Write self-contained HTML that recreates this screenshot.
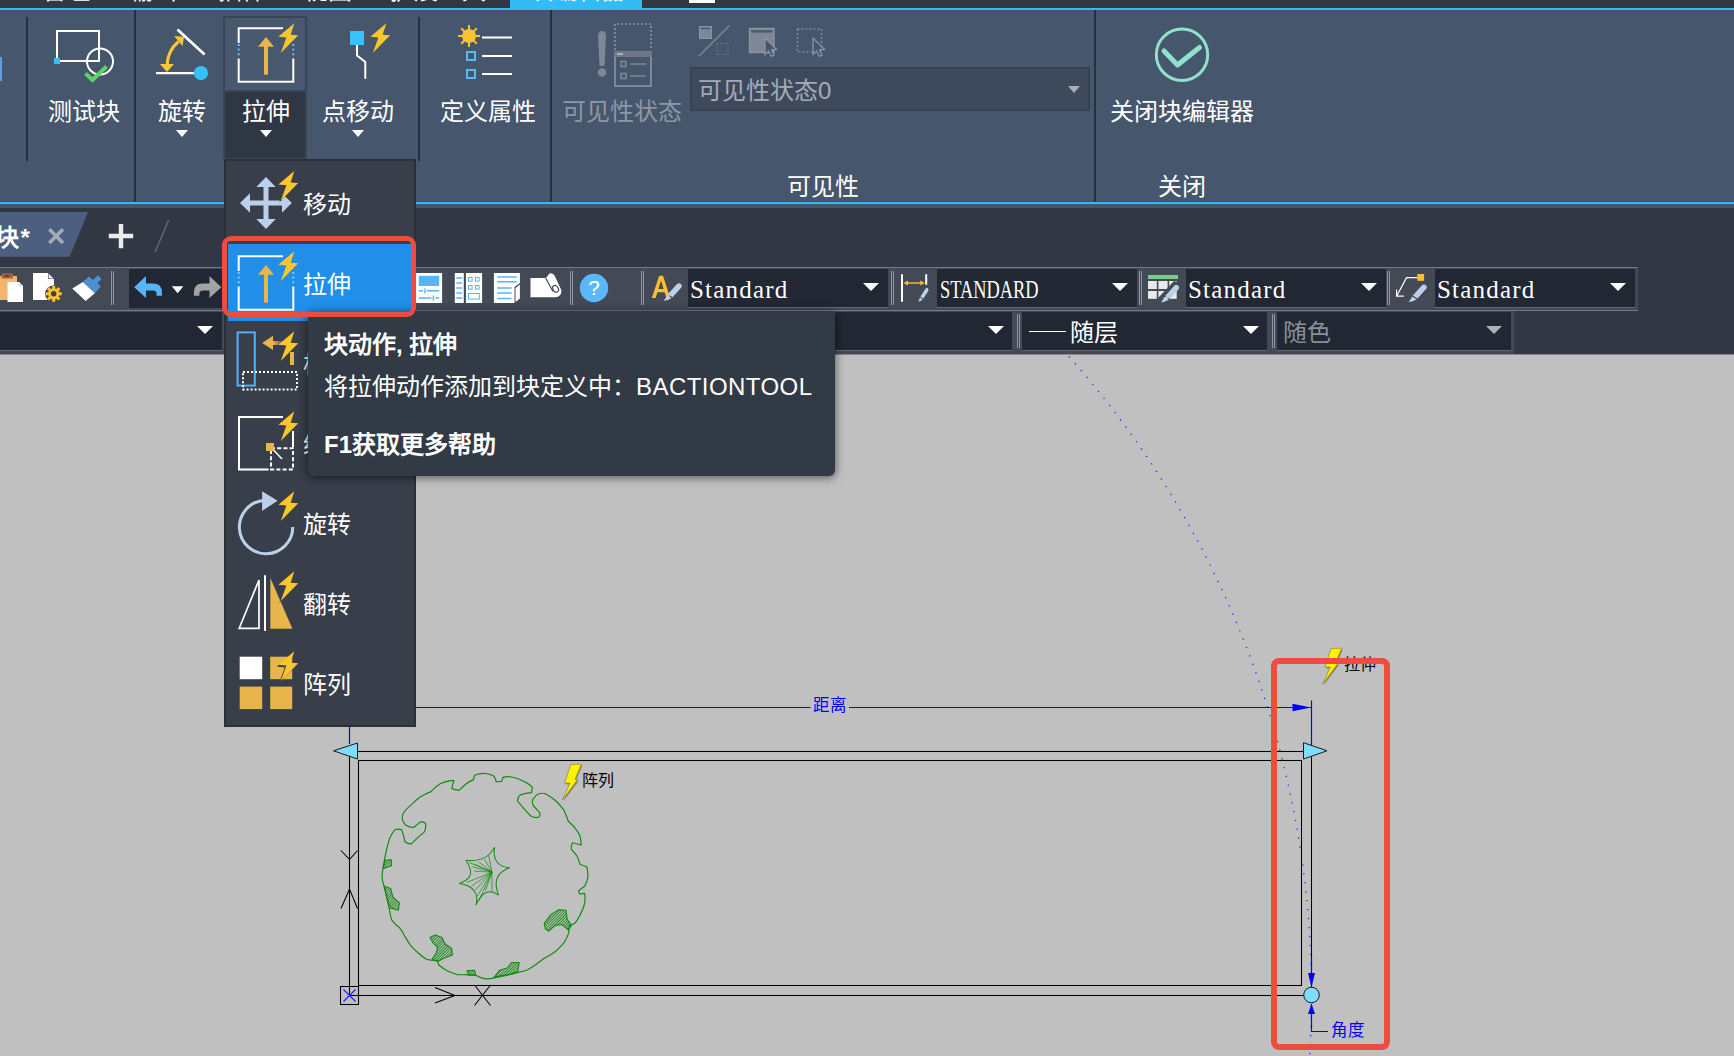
<!DOCTYPE html>
<html lang="zh-CN">
<head>
<meta charset="utf-8">
<title>Block Editor</title>
<style>
*{box-sizing:border-box;margin:0;padding:0}
html,body{width:1734px;height:1056px;overflow:hidden;background:#c0c0c0}
body{font-family:"Liberation Sans",sans-serif;color:#fff;position:relative}
.abs{position:absolute}
#root{position:absolute;left:0;top:0;width:1734px;height:1056px;overflow:hidden}
.t24{font-size:24px;line-height:28px;white-space:nowrap;position:absolute;margin-top:2px}
.ctr{transform:translateX(-50%)}
.mono{font-family:"Liberation Serif",serif;font-size:25px;line-height:30px;white-space:nowrap;position:absolute;color:#fff;transform-origin:0 0;letter-spacing:1.2px}
.mono.up{transform:scaleX(.735);letter-spacing:0}
.vsep{position:absolute;width:2px;background:#2a3039}
.tri{position:absolute;width:0;height:0;border-left:6px solid transparent;border-right:6px solid transparent;border-top:7px solid #fff}
.tri.t16{border-left-width:8px;border-right-width:8px;border-top-width:8px}
.combo{position:absolute;background:#212733;border-bottom:1px solid #5f6878}
svg{position:absolute;left:0;top:0;overflow:visible}
</style>
</head>
<body>
<div id="root">

<!-- ===== top tab strip ===== -->
<div class="abs" id="topbar" style="left:0;top:0;width:1734px;height:8px;background:#313843"></div>
<div class="abs" style="left:510px;top:0;width:132px;height:8px;background:#33bbf5"></div>
<div class="abs" style="left:689px;top:0;width:26px;height:3px;background:#fff"></div>
<div class="abs" style="left:0;top:0;width:1734px;height:8px;overflow:hidden">
  <div class="t24 ctr" style="left:66px;top:-25px">管理</div>
  <div class="t24 ctr" style="left:153px;top:-25px">输出</div>
  <div class="t24 ctr" style="left:242px;top:-25px">插件</div>
  <div class="t24 ctr" style="left:328px;top:-25px">视图</div>
  <div class="t24 ctr" style="left:438px;top:-25px">扩展工具</div>
  <div class="t24 ctr" style="left:577px;top:-25px">块编辑器</div>
</div>
<div class="abs" style="left:0;top:8px;width:1734px;height:2px;background:#33bbf5"></div>

<!-- ===== ribbon ===== -->
<div class="abs" id="ribbon" style="left:0;top:10px;width:1734px;height:198px;background:#46566c"></div>
<div class="abs" style="left:0;top:201px;width:1734px;height:1px;background:#414e62"></div>
<div class="abs" style="left:0;top:202px;width:1734px;height:2px;background:#33bbf5"></div>

<!-- ===== doc tab bar ===== -->
<div class="abs" id="docbar" style="left:0;top:208px;width:1734px;height:146px;background:#313843"></div>

<!-- ===== toolbars ===== -->

<!-- ===== canvas ===== -->
<div class="abs" id="canvas" style="left:0;top:354px;width:1734px;height:702px;background:#c0c0c0"></div>

<div class="abs" style="left:0;top:354px;width:1734px;height:1px;background:#85878b"></div>
<!--RIBBON-START-->
<!-- ribbon separators -->
<div class="vsep" style="left:26px;top:17px;height:144px"></div>
<div class="vsep" style="left:134px;top:10px;height:192px"></div>
<div class="vsep" style="left:418px;top:17px;height:144px"></div>
<div class="vsep" style="left:550px;top:10px;height:192px"></div>
<div class="vsep" style="left:1094px;top:10px;height:192px"></div>
<div class="abs" style="left:0;top:57px;width:2px;height:24px;background:#5a9fe6"></div>

<!-- stretch button (pressed) -->
<div class="abs" style="left:223px;top:16px;width:84px;height:143px;background:#3a4658"></div>
<div class="abs" style="left:225px;top:18px;width:80px;height:72px;background:#48586f"></div>
<div class="abs" style="left:225px;top:92px;width:80px;height:66px;background:#2f3744"></div>

<!-- ribbon labels -->
<div class="t24 ctr" style="left:84px;top:96px">测试块</div>
<div class="t24 ctr" style="left:182px;top:96px">旋转</div>
<div class="t24 ctr" style="left:266px;top:96px">拉伸</div>
<div class="t24 ctr" style="left:358px;top:96px">点移动</div>
<div class="t24 ctr" style="left:488px;top:96px">定义属性</div>
<div class="t24 ctr" style="left:622px;top:96px;color:#8e97a4">可见性状态</div>
<div class="t24 ctr" style="left:1182px;top:96px">关闭块编辑器</div>
<div class="t24 ctr" style="left:823px;top:171px">可见性</div>
<div class="t24 ctr" style="left:1182px;top:171px">关闭</div>
<div class="tri" style="left:176px;top:130px"></div>
<div class="tri" style="left:260px;top:130px"></div>
<div class="tri" style="left:352px;top:130px"></div>

<!-- visibility combobox -->
<div class="abs" style="left:690px;top:67px;width:400px;height:44px;background:#3e4a5c;border:2px solid #384253"></div>
<div class="t24" style="left:698px;top:75px;color:#a4abb6">可见性状态0</div>
<div class="tri" style="left:1068px;top:86px;border-top-color:#a9afb9"></div>

<!-- ribbon icons -->
<svg width="1734" height="210" viewBox="0 0 1734 210">
  <!-- test block -->
  <rect x="57" y="31" width="42" height="30" fill="none" stroke="#fff" stroke-width="2"/>
  <circle cx="100" cy="61.5" r="13" fill="none" stroke="#fff" stroke-width="2"/>
  <rect x="54" y="58" width="6" height="6" fill="#38bdf8"/>
  <path d="M85.5 73.5 L92.5 80 L106.5 66.5" fill="none" stroke="#5ad468" stroke-width="4"/>
  <!-- rotate -->
  <path d="M156 73.1 H200" stroke="#fff" stroke-width="2.1" fill="none"/>
  <path d="M177.4 29.4 L204.6 54.6" stroke="#fff" stroke-width="2.7" fill="none"/>
  <circle cx="200.9" cy="73.1" r="7.1" fill="#33c0fb"/>
  <path d="M167.2 65 Q167.5 51 178.5 41.5" fill="none" stroke="#fbc53a" stroke-width="3.1"/>
  <path d="M159.9 64 L174.1 64 L167 71.9 Z" fill="#fbc53a"/>
  <path d="M174.1 36.1 L184 36.7 L182.6 45.9 Z" fill="#fbc53a"/>
  <!-- stretch icon -->
  <g id="stretchIcon">
    <path d="M283 28.3 H238.7 V43" fill="none" stroke="#fff" stroke-width="2"/>
    <path d="M238.7 58.5 V81.7 H293.3 V58.5" fill="none" stroke="#fff" stroke-width="2"/>
    <path d="M238.7 44 V57" stroke="#59c3ff" stroke-width="2" stroke-dasharray="2 2.6" fill="none"/>
    <path d="M293.3 44 V57" stroke="#59c3ff" stroke-width="2" stroke-dasharray="2 2.6" fill="none"/>
    <path d="M264 74.7 V46.7 H258 L266 37 L274 46.7 H268 V74.7 Z" fill="#e8b54d"/>
    <path id="bolt" d="M294.3 23.3 L278.4 36.8 L286.4 37.6 L280.8 53 L298.2 35.3 L290.7 34.7 Z" fill="#fbc52f"/>
  </g>
  <!-- point move -->
  <rect x="350" y="31" width="14" height="14" fill="#38c0ff"/>
  <path d="M357 45 V55.5 L365.3 62 V78.7" fill="none" stroke="#fff" stroke-width="2"/>
  <path d="M386.3 23.3 L370.4 36.8 L378.4 37.6 L372.8 53 L390.2 35.3 L382.7 34.7 Z" fill="#fbc52f"/>
  <!-- define attribute -->
  <g stroke="#f9c22f" stroke-width="2" fill="none">
    <path d="M469 25 V47 M458 36 H480 M461.2 28.2 L476.8 43.8 M476.8 28.2 L461.2 43.8"/>
  </g>
  <circle cx="469" cy="36" r="7" fill="#f9c22f"/>
  <path d="M482 37.5 H512 M482 56 H512 M482 74 H512" stroke="#fff" stroke-width="2" fill="none"/>
  <rect x="467" y="52" width="8" height="8" fill="none" stroke="#5bb8f5" stroke-width="2"/>
  <rect x="467" y="70" width="8" height="8" fill="none" stroke="#5bb8f5" stroke-width="2"/>
  <!-- visibility state (disabled) -->
  <g fill="#7d8795">
    <path d="M598 36 Q598 31 602 31 Q606 31 606 36 L604.5 66 H599.5 Z"/>
    <ellipse cx="602" cy="72.5" rx="4.2" ry="4.2"/>
  </g>
  <path d="M615 50 V24 H651 V50" fill="none" stroke="#7d8795" stroke-width="2" stroke-dasharray="2 2"/>
  <rect x="615" y="52" width="36" height="34" fill="none" stroke="#7d8795" stroke-width="2"/>
  <rect x="614" y="51" width="38" height="6" fill="#6f7886"/>
  <rect x="617" y="53" width="6" height="2" fill="#a9b0bb"/>
  <rect x="621" y="61.5" width="5" height="5" fill="none" stroke="#7d8795" stroke-width="1.6"/>
  <rect x="621" y="73.5" width="5" height="5" fill="none" stroke="#7d8795" stroke-width="1.6"/>
  <path d="M630 64 H646 M630 76 H646" stroke="#7d8795" stroke-width="1.6"/>
  <!-- small disabled icons -->
  <rect x="699.5" y="26.5" width="12" height="12" fill="#7d8795" stroke="#8b94a1" stroke-width="1"/>
  <rect x="700.5" y="27.6" width="10" height="1.6" fill="#4f5e74"/>
  <path d="M699 56 L729.5 25.5" stroke="#7d8795" stroke-width="1.4"/>
  <rect x="717" y="43.5" width="11" height="11" fill="none" stroke="#6d7785" stroke-width="1.2" stroke-dasharray="1.5 1.5"/>
  <rect x="749.5" y="28.5" width="24.5" height="24" fill="#7d8795" stroke="#8b94a1" stroke-width="1.4"/>
  <rect x="751" y="30" width="21.5" height="2.6" fill="#4f5e74"/>
  <path d="M765 38 V54.5 L768.7 51 L771.2 56.5 L774 55.2 L771.5 49.8 L776.5 49.5 Z" fill="#46566c" stroke="#8b94a1" stroke-width="1.3"/>
  <rect x="797.5" y="29" width="24" height="23" fill="none" stroke="#7d8795" stroke-width="1.6" stroke-dasharray="2 2"/>
  <path d="M813 38 V54.5 L816.7 51 L819.2 56.5 L822 55.2 L819.5 49.8 L824.5 49.5 Z" fill="#46566c" stroke="#8b94a1" stroke-width="1.3"/>
  <!-- close editor -->
  <circle cx="1182" cy="54.7" r="25.7" fill="none" stroke="#8fe3cd" stroke-width="3"/>
  <path d="M1164 51 L1177.5 65 L1199.5 47.5" fill="none" stroke="#8fe3cd" stroke-width="5" stroke-linecap="round" stroke-linejoin="round"/>
</svg>
<!--RIBBON-END-->
<!--DOCBAR-START-->
<!-- document tab -->
<svg width="1734" height="270" viewBox="0 0 1734 270">
  <path d="M0 212 H88 L69.6 256.7 H0 Z" fill="#4c5f80"/>
  <path d="M49.3 229.3 L63 243 M63 229.3 L49.3 243" stroke="#a3abbb" stroke-width="3.6" fill="none"/>
  <path d="M108.8 236 H133.2 M121 224 V248.2" stroke="#ebebeb" stroke-width="4.4" fill="none"/>
  <path d="M168.7 220 L155.2 251.7" stroke="#56687e" stroke-width="1.6" fill="none"/>
</svg>
<div class="t24" style="left:-5px;top:222px;font-weight:bold;letter-spacing:1.5px">块*</div>
<!--DOCBAR-END-->
<!--TOOLBAR-START-->
<!-- toolbar row 1 -->
<div class="abs" style="left:0;top:267px;width:1638px;height:44px;background:#434a56;border-top:1px solid #707a8b;border-bottom:1px solid #707a8b"></div>
<div class="abs" style="left:0;top:311px;width:1514px;height:43px;background:#434a56"></div>
<div class="abs" style="left:129px;top:269px;width:96px;height:39px;background:#212733"></div>
<!-- row1 combos -->
<div class="combo" style="left:688px;top:269px;width:200px;height:39px"></div>
<div class="combo" style="left:937px;top:269px;width:200px;height:39px"></div>
<div class="combo" style="left:1186px;top:269px;width:200px;height:39px"></div>
<div class="combo" style="left:1435px;top:269px;width:200px;height:39px"></div>
<div class="mono" style="left:690px;top:274.5px">Standard</div>
<div class="mono up" style="left:940px;top:274.5px">STANDARD</div>
<div class="mono" style="left:1188px;top:274.5px">Standard</div>
<div class="mono" style="left:1437px;top:274.5px">Standard</div>
<div class="tri t16" style="left:863px;top:283px"></div>
<div class="tri t16" style="left:1112px;top:283px"></div>
<div class="tri t16" style="left:1361px;top:283px"></div>
<div class="tri t16" style="left:1610px;top:283px"></div>
<!-- row 2 -->
<div class="combo" style="left:0;top:312px;width:222px;height:39px"></div>
<div class="combo" style="left:835px;top:312px;width:177px;height:39px"></div>
<div class="combo" style="left:1022px;top:312px;width:245px;height:39px"></div>
<div class="combo" style="left:1277px;top:312px;width:234px;height:39px"></div>
<div class="tri t16" style="left:197px;top:326px"></div>
<div class="tri t16" style="left:988px;top:326px"></div>
<div class="tri t16" style="left:1243px;top:326px"></div>
<div class="tri t16" style="left:1486px;top:326px;border-top-color:#b0b0b0"></div>
<div class="abs" style="left:1029px;top:330.5px;width:37px;height:1.5px;background:#fff"></div>
<div class="t24" style="left:1070px;top:317px">随层</div>
<div class="t24" style="left:1283px;top:317px;color:#8a8f98">随色</div>
<!-- toolbar grips / separators + icons -->
<svg width="1734" height="360" viewBox="0 0 1734 360">
  <g stroke="#8c96a8" stroke-width="1" fill="none">
    <path d="M111.5 271 V305 M113.5 271 V305"/>
    <path d="M570.5 271 V305 M572.5 271 V305"/>
    <path d="M641.5 271 V305 M643.5 271 V305"/>
    <path d="M891.5 271 V305 M893.5 271 V305"/>
    <path d="M1139.5 271 V305 M1141.5 271 V305"/>
    <path d="M1387.5 271 V305 M1389.5 271 V305"/>
    <path d="M1017.5 314 V348 M1019.5 314 V348"/>
    <path d="M1272.5 314 V348 M1274.5 314 V348"/>
  </g>
  <!-- clipboard -->
  <rect x="-2" y="276" width="19" height="24" rx="1" fill="#f5b56b"/>
  <rect x="1.5" y="273.5" width="11.5" height="5" fill="#b0603a"/>
  <rect x="4.5" y="275" width="5" height="2" fill="#434a56"/>
  <path d="M7.5 282 H19 L23 286 V302 H7.5 Z" fill="#fff"/>
  <path d="M19 282 V286 H23 Z" fill="#d8dde6"/>
  <!-- doc + gear -->
  <path d="M33 273 H48 L54 279 V300 H33 Z" fill="#fff"/>
  <path d="M48 273 V279 H54 Z" fill="#434a56"/>
  <path d="M48.6 273.8 V278.6 H53.4 Z" fill="#fff" opacity=".9"/>
  <g transform="translate(53.7 293.8)">
    <circle r="8.6" fill="#434a56"/>
    <g fill="#f9c22f">
      <circle r="5.6"/>
      <rect x="-1.5" y="-8" width="3" height="16"/>
      <rect x="-1.5" y="-8" width="3" height="16" transform="rotate(45)"/>
      <rect x="-1.5" y="-8" width="3" height="16" transform="rotate(90)"/>
      <rect x="-1.5" y="-8" width="3" height="16" transform="rotate(135)"/>
    </g>
    <circle r="2.7" fill="#3a4150"/>
  </g>
  <!-- brush -->
  <path d="M97.9 275.3 L101.5 279 L97.5 283 L100.8 286.5 L94.8 293.2 L82.9 281.9 L88.9 276.6 L92.9 279.9 Z" fill="#4f8fd0"/>
  <path d="M82.9 281.9 L94.8 293.2 L85.6 301.1 L72.3 288.5 Z" fill="#fff"/>
  <!-- undo / redo -->
  <path d="M134.2 287.2 L146 276 V283.6 H153 Q162 283.6 162 293 V295.8 H156.5 V293.5 Q156.5 290.6 152.5 290.6 H146 V298 Z" fill="#56b4f9"/>
  <path d="M171.8 286.2 H183.4 L177.6 293.2 Z" fill="#fff"/>
  <path d="M221.3 287.2 L209.5 276 V283.6 H202.5 Q193.9 283.6 193.9 293 V295.8 H199.4 V293.5 Q199.4 290.6 203.4 290.6 H209.5 V298 Z" fill="#a3a3a3"/>
  <!-- palette icons -->
  <rect x="415.8" y="273" width="26.3" height="30" fill="#fff"/>
  <rect x="418.8" y="275.8" width="20.4" height="10.2" fill="#56b4f9"/>
  <path d="M418.8 290.8 H439.2 M418.8 298 H439.2" stroke="#56b4f9" stroke-width="1.4"/>
  <rect x="423" y="289" width="4" height="3.6" fill="#fff"/><rect x="424.3" y="288.4" width="1.4" height="5" fill="#56b4f9"/>
  <rect x="431.4" y="296.2" width="4" height="3.6" fill="#fff"/><rect x="432.7" y="295.6" width="1.4" height="5" fill="#56b4f9"/>
  <rect x="454.8" y="273" width="9" height="30" fill="#fff"/>
  <rect x="465.9" y="273" width="16.2" height="30" fill="#fff"/>
  <path d="M456.3 278 H462.3 M456.3 283 H462.3 M456.3 288 H462.3 M456.3 293 H462.3 M456.3 298 H462.3" stroke="#56b4f9" stroke-width="1.4"/>
  <g fill="none" stroke="#56b4f9" stroke-width="1">
    <rect x="468.5" y="277.5" width="3.6" height="3.6"/><rect x="475.5" y="277.5" width="3.6" height="3.6"/>
    <rect x="468.5" y="285.5" width="3.6" height="3.6"/><rect x="475.5" y="285.5" width="3.6" height="3.6"/>
    <rect x="468.5" y="293.5" width="10.8" height="5.6"/>
  </g>
  <path d="M493.9 273 H519.9 V283 L514.5 287 V303 H493.9 Z" fill="#fff"/>
  <path d="M515.5 288 L519.9 284.5 V298.5 L515.5 302 Z" fill="#fff"/>
  <path d="M497.3 277 H516.8 M497.3 281.8 H516.8 M497.3 288 H511.5 M497.3 293 H511.5 M497.3 298.6 H511.5" stroke="#56b4f9" stroke-width="1.5"/>
  <path d="M530.5 278 H546 L549.5 273.6 Q553 272.6 554.8 276 L561.3 290 Q562 297.3 555 297.3 H530.5 Z" fill="#fff"/>
  <ellipse cx="555.6" cy="288.8" rx="2.6" ry="3.6" transform="rotate(-28 555.6 288.8)" fill="none" stroke="#434a56" stroke-width="1.2"/>
  <path d="M545.8 278.3 L553 291.5" stroke="#434a56" stroke-width="1.2" fill="none"/>
  <!-- help -->
  <circle cx="594" cy="288" r="14.2" fill="#5bb7fb"/>
  <!-- text style icon -->
  <path d="M651.8 298 L659.2 275.8 H663 L670.2 298 H666.4 L664.6 292.2 H657.4 L655.6 298 Z M658.4 289 H663.6 L661 280.4 Z" fill="#fbc02d" fill-rule="evenodd"/>
  <g id="pen1"><path d="M680.2 283.6 Q682.6 285.2 681.4 287.4 L672.6 297.2 L667.8 294.3 L676.8 284.2 Q678.6 282.6 680.2 283.6 Z M667 295.2 L671.6 298 Q668.5 300.4 663.6 300.8 Q665.8 298.2 667 295.2 Z" fill="#bcd0ea"/></g>
  <!-- dim style icon -->
  <path d="M902 274.2 V301.7 M926.2 274.2 V284.8" stroke="#fff" stroke-width="2" fill="none"/>
  <path d="M906 283 H922" stroke="#fbc02d" stroke-width="1.4" fill="none"/>
  <path d="M903.5 283 L908 280.4 V285.6 Z M924.8 283 L920.3 280.4 V285.6 Z" fill="#fbc02d"/>
  <g transform="translate(535.8 64) scale(0.576 0.79)"><use href="#pen1"/></g>
  <!-- table style icon -->
  <rect x="1148" y="275" width="30" height="4" fill="#7dcb8a"/>
  <g fill="#e9e9e9">
    <rect x="1148" y="281" width="8.8" height="8"/><rect x="1158.4" y="281" width="9.2" height="8"/><rect x="1169.2" y="281" width="7.5" height="8"/>
    <rect x="1148" y="291" width="8.8" height="7.8"/><rect x="1158.4" y="291" width="9.2" height="7.8"/><rect x="1169.2" y="291" width="7.5" height="7.8"/>
  </g>
  <path d="M1179.5 283 L1160 303 L1158 298 L1174 281 Z" fill="#434a56"/>
  <use href="#pen1" x="497.4" y="1.6"/>
  <!-- mleader style icon -->
  <rect x="1417.3" y="274" width="6.8" height="6.8" fill="#fbc02d"/>
  <path d="M1417.3 277.6 H1406.5 L1396.6 296.2 M1396.6 289.5 V296.2 H1403.8" stroke="#fff" stroke-width="1.2" fill="none"/>
  <use href="#pen1" x="745" y="1.2"/>
</svg>
<div class="abs" style="left:586px;top:273px;width:16px;height:30px;font-size:20px;line-height:30px;color:#fff;text-align:center;text-shadow:0 0 .6px #fff">?</div>
<!--TOOLBAR-END-->
<!--CANVAS-START-->
<svg width="1734" height="1056" viewBox="0 0 1734 1056" id="cad">
  <defs>
    <pattern id="hatch" width="9" height="9" patternUnits="userSpaceOnUse" patternTransform="rotate(45)">
      <rect x="0" y="0" width="4.2" height="9" fill="#158815"/>
    </pattern>
  </defs>
  <!-- dotted rotation arc (centre = base point) -->
  <path d="M1069 356.5 A962 962 0 0 1 1309.6 1056" fill="none" stroke="#2a2aff" stroke-width="1.3" stroke-dasharray="1.3 7.7"/>
  <!-- distance dimension -->
  <g stroke="#0000ff" stroke-width="1.2" fill="none">
    <path d="M415 707.5 H810.5 M849 707.5 H1311"/>
    <path d="M349.5 726 V744"/>
    <path d="M1311.5 700.5 V747"/>
  </g>
  <path d="M1311 707.5 L1292.5 703.8 V711.2 Z" fill="#0000ff"/>
  <!-- double rectangle -->
  <g stroke="#000" stroke-width="1.05" fill="none">
    <rect x="349.5" y="751.5" width="962" height="244"/>
    <rect x="358.5" y="760.5" width="943" height="225"/>
    <rect x="340.5" y="986.5" width="18" height="18"/>
    <path d="M341 850.5 L349.5 859.5 L357.5 850.5"/>
    <path d="M341 908.5 L349.5 889 L357.5 908.5"/>
    <path d="M435 987.5 L455 995.5 L435 1003"/>
    <path d="M474.5 985 L490.5 1005.5 M490.5 985 L474.5 1005.5"/>
  </g>
  <path d="M343.5 989.5 L355.5 1001.5 M355.5 989.5 L343.5 1001.5" stroke="#2222ff" stroke-width="1.2" fill="none"/>
  <!-- grips -->
  <path d="M333.5 750.8 L357.5 743 V759 Z" fill="#7fdcfb" stroke="#1a1a1a" stroke-width="1"/>
  <path d="M1327 750.8 L1303.5 742.7 V759 Z" fill="#7fdcfb" stroke="#1a1a1a" stroke-width="1"/>
  <!-- angle parameter -->
  <g stroke="#0000ff" stroke-width="1.2" fill="none">
    <path d="M1311.5 958 V986"/>
    <path d="M1311.5 1004 V1031.5 H1328"/>
  </g>
  <path d="M1311.5 987 L1308 973 H1315 Z" fill="#0000ff"/>
  <path d="M1311.5 1003.5 L1308 1014 H1315 Z" fill="#0000ff"/>
  <circle cx="1311.5" cy="995" r="7.8" fill="#7fdcfb" stroke="#1a1a1a" stroke-width="1"/>
  <!-- tree symbol -->
  <g transform="translate(370 760) scale(0.21782)" stroke="#128a12" stroke-width="5.4" fill="none" stroke-linejoin="round">
    <path fill="url(#hatch)" stroke-width="5" d="M800 750 L830 710 L865 688 L900 690 L905 730 L925 760 L910 780 L880 755 L850 760 L820 785 L805 775 Z"/>
    <path fill="url(#hatch)" stroke-width="5" d="M275 815 L300 803 L330 815 L345 845 L375 865 L378 895 L340 910 L310 925 L285 915 L305 885 L310 860 L290 840 Z"/>
    <path fill="url(#hatch)" stroke-width="5" d="M570 998 L595 965 L630 955 L650 930 L685 930 L678 970 L640 985 L600 990 Z"/>
    <path fill="url(#hatch)" stroke-width="5" d="M65 580 L95 590 L105 630 L135 655 L130 690 L95 680 L80 640 Z"/>
    <path fill="url(#hatch)" stroke-width="5" d="M68 460 L98 458 L98 485 L62 498 Z"/>
    <path fill="url(#hatch)" stroke-width="5" d="M445 968 L480 965 L485 985 L455 988 Z"/>
    <path d="M480 70 Q505 60 530 62 Q555 64 570 75 L580 100 L605 98 L610 80 Q630 74 650 78 Q680 84 700 95 Q730 108 745 125 L742 150 Q715 152 690 160 Q675 172 678 190 L700 215 Q720 240 740 258 Q760 268 775 262 Q784 252 778 240 L750 210 Q742 195 748 180 Q758 162 775 155 Q792 150 805 155 Q830 168 850 185 Q872 205 890 230 Q902 256 910 280 L940 310 Q956 330 965 350 L970 390 L930 380 Q922 394 925 410 L950 440 L965 480 L995 490 Q1002 515 1000 540 Q996 562 985 580 L958 600 L962 615 L985 612 Q990 636 985 660 Q978 686 965 710 Q955 732 940 750 L915 760 L912 795 Q904 818 890 840 Q872 862 850 880 Q826 897 800 910 L760 940 Q740 954 720 965 L680 975 Q650 984 620 990 L570 1000 Q550 1006 530 1005 Q508 1000 490 990 L440 985 Q420 987 400 985 Q374 977 350 965 Q330 954 315 940 L310 920 Q284 922 260 915 Q238 902 220 885 Q200 868 185 850 L160 810 Q150 788 135 770 Q115 754 100 735 Q92 712 90 690 L65 580 Q55 555 55 530 Q60 485 70 440 Q78 400 90 360 Q100 336 115 320 Q130 314 145 320 L155 350 L160 375 Q174 386 190 385 L215 360 L250 330 Q258 310 255 290 Q242 282 230 285 L200 310 Q180 310 165 300 Q152 286 148 270 Q148 254 155 240 Q171 221 190 205 Q209 186 230 170 Q254 155 280 145 Q298 125 320 110 Q344 99 370 95 L385 95 L375 130 Q392 140 410 138 L440 110 Q456 98 475 90 Z"/>
    <g stroke-width="4.6">
      <path d="M440 460 Q535 472 572 400"/>
      <path d="M572 400 Q558 486 640 495"/>
      <path d="M640 495 Q553 528 590 620"/>
      <path d="M590 620 Q528 574 487 665"/>
      <path d="M487 665 Q506 582 410 567"/>
      <path d="M410 567 Q496 540 440 460"/>
    </g>
    <g stroke-width="3.2">
      <path d="M560 515 L455 470 M560 515 L470 490 M560 515 L478 510 M560 515 L480 478 M560 515 L500 468 M560 515 L525 455 M560 515 L545 440"/>
      <path d="M560 515 L445 562 M560 515 L465 580 M560 515 L480 600 M560 515 L492 625 M560 515 L500 645 M560 515 L530 600 M560 515 L560 605"/>
    </g>
  </g>
  <!-- action bolts -->
  <g id="boltR">
    <path d="M1332 649.6 L1342.7 649.4 L1336.3 664.6 L1339.2 664.4 L1323.8 685.2 L1331.3 668.4 L1326 668.2 Z" fill="#85856a"/>
    <path d="M1331 648.4 L1341.7 648.2 L1335.3 663.4 L1338.2 663.2 L1322.8 684 L1330.3 667.2 L1325 667 Z" fill="#fff200" stroke="#77772e" stroke-width="0.6"/>
  </g>
  <use href="#boltR" x="-760.3" y="116"/>
</svg>
<div class="abs" style="left:813px;top:696px;font-size:16.5px;line-height:18px;color:#0000ff;white-space:nowrap">距离</div>
<div class="abs" style="left:582px;top:772px;font-size:16px;line-height:18px;color:#000;white-space:nowrap">阵列</div>
<div class="abs" style="left:1344px;top:656px;font-size:16px;line-height:18px;color:#000;white-space:nowrap">拉伸</div>
<div class="abs" style="left:1331px;top:1021px;font-size:16.5px;line-height:18px;color:#0000ff;white-space:nowrap">角度</div>
<!-- red highlight box on canvas -->
<div class="abs" style="left:1271.4px;top:658.4px;width:118.2px;height:391.8px;border:6.3px solid #ee4b41;border-radius:8px"></div>
<!--CANVAS-END-->
<!--MENU-START-->
<!-- dropdown menu -->
<div class="abs" id="menu" style="left:224px;top:159px;width:192px;height:568px;background:#383e4a;border:2px solid #2a2f38"></div>
<div class="abs" style="left:228px;top:244px;width:184px;height:77px;background:#218fe9"></div>
<div class="t24" style="left:303px;top:189px">移动</div>
<div class="t24" style="left:303px;top:269px">拉伸</div>
<div class="t24" style="left:303px;top:349px">极轴拉伸</div>
<div class="t24" style="left:303px;top:429px">缩放</div>
<div class="t24" style="left:303px;top:509px">旋转</div>
<div class="t24" style="left:303px;top:589px">翻转</div>
<div class="t24" style="left:303px;top:669px">阵列</div>
<svg width="1734" height="1056" viewBox="0 0 1734 1056">
  <defs>
    <path id="blt" d="M294.3 23.3 L278.4 36.8 L286.4 37.6 L280.8 53 L298.2 35.3 L290.7 34.7 Z" fill="#fbc52f"/>
    <path id="blts" d="M294.3 23.3 L278.4 36.8 L286.4 37.6 L280.8 53 L298.2 35.3 L290.7 34.7 Z" fill="#383e4a"/>
    <linearGradient id="fadeL" x1="0" x2="1" y1="0" y2="0"><stop offset="0" stop-color="#e8b54d"/><stop offset="1" stop-color="#e8b54d" stop-opacity="0"/></linearGradient>
  </defs>
  <!-- move -->
  <g fill="#bcd0ea">
    <path d="M263.5 186 H268.5 V220 H263.5 Z"/>
    <path d="M249 200.5 H283 V205.5 H249 Z"/>
    <path d="M266 177 L275.7 187 H256.3 Z"/>
    <path d="M266 229 L275.7 219 H256.3 Z"/>
    <path d="M240 203 L250 193.3 V212.7 Z"/>
    <path d="M291.8 203 L282 193.3 V212.7 Z"/>
  </g>
  <use href="#blts" x="-1.6" y="149.5"/><use href="#blt" y="147.7"/>
  <!-- stretch (selected) -->
  <g transform="translate(0 228)">
    <path d="M283 28.3 H238.7 V43" fill="none" stroke="#fff" stroke-width="2"/>
    <path d="M238.7 58.5 V81.7 H293.3 V58.5" fill="none" stroke="#fff" stroke-width="2"/>
    <path d="M238.7 44 V57" stroke="#7ccaff" stroke-width="2" stroke-dasharray="2 2.6" fill="none"/>
    <path d="M293.3 44 V57" stroke="#7ccaff" stroke-width="2" stroke-dasharray="2 2.6" fill="none"/>
    <path d="M264 74.7 V46.7 H258 L266 37 L274 46.7 H268 V74.7 Z" fill="#e8b54d"/>
    <use href="#blt"/>
  </g>
  <!-- polar stretch -->
  <rect x="237.6" y="332.4" width="17.2" height="53.2" fill="none" stroke="#4fb4f5" stroke-width="2"/>
  <rect x="243" y="372" width="54" height="17.6" fill="none" stroke="#fff" stroke-width="2" stroke-dasharray="2 2"/>
  <path d="M262.2 343 L273 335.8 V350 Z" fill="#e8b54d"/>
  <rect x="273" y="341" width="12" height="4" fill="url(#fadeL)"/>
  <rect x="290" y="352" width="4" height="13" fill="#e8b54d"/>
  <use href="#blt" y="308"/>
  <!-- scale -->
  <path d="M283 417 H239 V469.5 H268.5" fill="none" stroke="#fff" stroke-width="2"/>
  <path d="M293 431 V447" fill="none" stroke="#fff" stroke-width="2"/>
  <rect x="271" y="448.2" width="22" height="21.2" fill="none" stroke="#fff" stroke-width="2" stroke-dasharray="4 2.2"/>
  <rect x="266" y="443" width="8" height="8" fill="#e8b54d"/>
  <path d="M273.5 450 L282 459" stroke="#fff" stroke-width="1.6"/>
  <use href="#blt" y="388"/>
  <!-- rotate -->
  <path d="M264 500.4 A26.7 26.7 0 1 0 292.75 527" fill="none" stroke="#bcd0ea" stroke-width="3"/>
  <path d="M277.6 500.8 L262.1 491.2 V510.9 Z" fill="#bcd0ea"/>
  <use href="#blt" y="468"/>
  <!-- flip -->
  <path d="M259 580 V628.3 H239.2 Z" fill="none" stroke="#fff" stroke-width="1.7"/>
  <path d="M265 575.3 V631" stroke="#fff" stroke-width="2"/>
  <path d="M270.4 578 V628.8 H292.4 Z" fill="#e8b54d"/>
  <use href="#blts" x="-1.6" y="549.8"/><use href="#blt" y="548"/>
  <!-- array -->
  <rect x="239.7" y="656.7" width="22.5" height="22.5" fill="#fff"/>
  <rect x="270.2" y="656.7" width="22" height="22.5" fill="#e8b54d"/>
  <rect x="239.7" y="686.6" width="22.5" height="22.5" fill="#e8b54d"/>
  <rect x="270.2" y="686.6" width="22" height="22.5" fill="#e8b54d"/>
  <use href="#blts" x="-1.6" y="629.8"/><use href="#blt" y="628"/>
</svg>
<!--MENU-END-->
<!--TOOLTIP-START-->
<!-- tooltip -->
<div class="abs" id="tip" style="left:308px;top:312px;width:527px;height:164px;background:#323a45;border-radius:6px;box-shadow:0 1px 9px 1px rgba(0,0,0,.5)"></div>
<div class="t24" style="left:324px;top:329px;font-weight:bold">块动作, 拉伸</div>
<div class="t24" style="left:324px;top:371px">将拉伸动作添加到块定义中：<span style="letter-spacing:.45px">BACTIONTOOL</span></div>
<div class="t24" style="left:324px;top:429px;font-weight:bold">F1获取更多帮助</div>
<!--TOOLTIP-END-->
<!-- red highlight on selected item -->
<div class="abs" style="left:222px;top:236px;width:194px;height:81px;border:5.5px solid #ee4b41;border-radius:9px"></div>


</div>
</body>
</html>
